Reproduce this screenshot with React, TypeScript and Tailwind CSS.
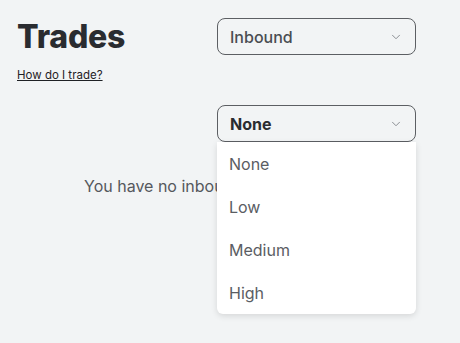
import { ChevronDown } from "lucide-react";

const options = ["None", "Low", "Medium", "High"];

function Select({ label, bold }: { label: string; bold?: boolean }) {
  return (
    <div className="flex h-[37px] w-[199px] items-center justify-between rounded-[8px] border border-[#5c5f63] pl-[12px] pr-[12px]">
      <span
        className={
          bold
            ? "text-[16px] font-bold text-[#2a2c30]"
            : "text-[16px] font-medium text-[#4a4d52]"
        }
      >
        {label}
      </span>
      <ChevronDown size={14} strokeWidth={1.5} className="text-[#7d8086]" />
    </div>
  );
}

export default function App() {
  return (
    <div
      className="h-[343px] w-[460px] overflow-hidden bg-[#f2f4f5]"
      style={{ fontFamily: "Inter, 'Open Sans', sans-serif" }}
    >
      <div className="flex pl-[17px] pt-[18px]">
        <div className="w-[200px]">
          <h1 className="text-[32px] font-extrabold leading-[37px] tracking-[-0.2px] text-[#2a2c30]">
            Trades
          </h1>
          <a href="#" className="mt-[12px] block text-[11.5px] text-[#1f2125] underline">
            How do I trade?
          </a>
        </div>
        <Select label="Inbound" />
      </div>

      <div className="relative mt-[21px] pl-[217px]">
        <Select label="None" bold />
        <div className="absolute left-[217px] top-[37px] z-10 w-[199px] rounded-b-[6px] bg-white shadow-[0_2px_6px_rgba(0,0,0,0.12)]">
          {options.map((o) => (
            <div key={o} className="flex h-[43px] items-center px-[12px] text-[16px] text-[#5a5d63]">
              {o}
            </div>
          ))}
        </div>
      </div>

      <p className="mt-[32px] pl-[84px] text-[16px] text-[#55585d]">
        You have no inbound trades
      </p>
    </div>
  );
}
